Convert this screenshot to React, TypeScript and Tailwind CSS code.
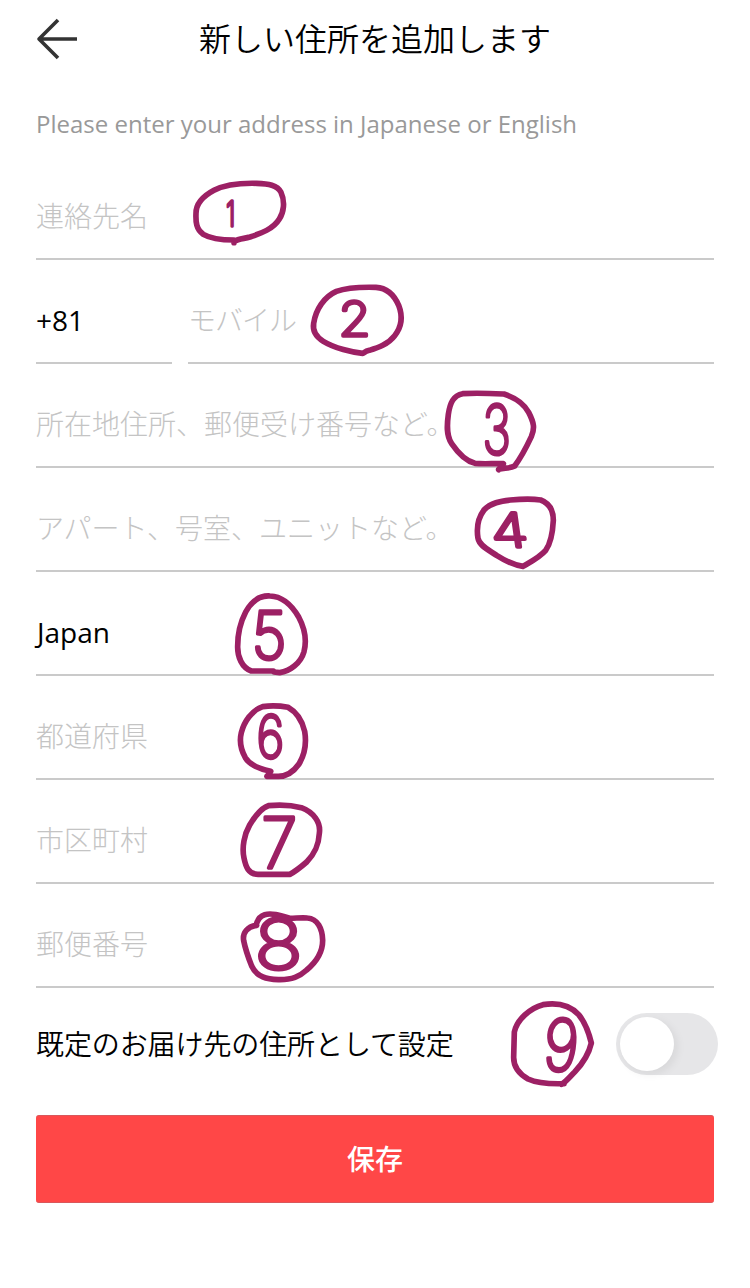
import React, { useState } from 'react';
import clsx from 'clsx';

interface MarkProps {
  digit: string;
  ring: string;
  className: string;
  viewBox: string;
  // digit placement: centre, baseline, size and horizontal stretch
  x: number;
  y: number;
  size: number;
  stretch: number;
  slant?: number;
}

// Hand-drawn numbered ring laid over a form row
const Mark = ({ digit, ring, className, viewBox, x, y, size, stretch, slant = 0 }: MarkProps) => (
  <svg
    viewBox={viewBox}
    className={clsx('absolute pointer-events-none overflow-visible', className)}
    fill="none"
    stroke="#9c2064"
    strokeLinecap="round"
    strokeLinejoin="round"
  >
    <path d={ring} strokeWidth={17} />
    <text
      transform={`translate(${x} ${y}) skewX(${slant}) scale(${stretch} 1)`}
      textAnchor="middle"
      fontSize={size}
      fill="#9c2064"
      strokeWidth={10}
      className="font-['Inter','Lato',sans-serif] font-extralight"
    >
      {digit}
    </text>
  </svg>
);

const marks: Record<string, MarkProps> = {
  name: {
    digit: '1',
    className: 'left-[144px] top-[14px] w-[120px] h-[85px]',
    viewBox: '0 0 360 255',
    ring: 'M162 218 L162 210 C125 210 90 205 70 193 C48 178 47 155 48 130 C48 98 72 77 102 61 C138 42 190 39 230 40 C265 41 292 45 303 67 C316 95 311 127 298 147 C280 177 243 190 210 201 C192 206 176 206 162 214',
    x: 152, y: 168, size: 100, stretch: 0.7,
  },
  mobile: {
    digit: '2',
    className: 'left-[264px] top-[15px] w-[120px] h-[90px]',
    viewBox: '0 0 360 270',
    ring: 'M188 235 C155 232 105 220 70 199 C42 182 38 163 41 145 C47 103 73 65 109 49 C145 36 190 36 228 37 C264 39 283 61 296 91 C309 125 304 157 284 182 C264 208 234 218 208 226 C195 229 190 235 188 235',
    x: 164, y: 182, size: 142, stretch: 1.1,
  },
  street: {
    digit: '3',
    className: 'left-[394px] top-[16px] w-[120px] h-[95px]',
    viewBox: '0 0 360 285',
    ring: 'M206 269 L220 251 C190 250 160 253 135 250 C105 243 82 216 65 191 C48 166 51 133 55 103 C60 69 70 46 98 41 C140 38 180 40 222 42 C255 53 282 71 296 97 C312 128 315 145 304 170 C290 200 274 231 254 258 C240 266 220 263 206 268',
    x: 200, y: 221, size: 205, stretch: 0.7,
  },
  apartment: {
    digit: '4',
    className: 'left-[424px] top-[17px] w-[110px] h-[90px]',
    viewBox: '0 0 330 270',
    ring: 'M189 244 C158 240 133 226 111 212 C88 196 58 183 54 160 C49 129 54 99 72 75 C92 53 121 48 151 45 C185 42 216 41 242 45 C271 56 280 80 280 106 C278 145 272 175 257 196 C239 217 211 231 189 244',
    x: 154, y: 186, size: 142, stretch: 1.28, slant: 8,
  },
  country: {
    digit: '5',
    className: 'left-[184px] top-[13px] w-[100px] h-[100px]',
    viewBox: '0 0 300 300',
    ring: 'M160 258 L94 258 C66 248 52 216 53 183 C53 146 61 112 77 81 C94 50 120 31 150 33 C188 34 216 62 236 96 C252 126 261 165 252 200 C242 235 209 259 179 263 L162 261',
    x: 147, y: 223, size: 198, stretch: 0.92,
  },
  prefecture: {
    digit: '6',
    className: 'left-[189px] top-[19px] w-[100px] h-[90px]',
    viewBox: '0 0 300 270',
    ring: 'M126 244 L137 229 C107 223 75 211 61 188 C46 161 43 137 49 113 C57 81 80 46 113 35 C140 31 168 33 189 37 C216 52 232 80 239 109 C246 151 239 179 222 207 C205 231 185 247 153 244 L126 244',
    x: 136, y: 190, size: 178, stretch: 0.8,
  },
  city: {
    digit: '7',
    className: 'left-[194px] top-[15px] w-[105px] h-[90px]',
    viewBox: '0 0 315 270',
    ring: 'M180 238 L84 238 C55 238 47 214 42 189 C35 157 43 118 59 90 C73 67 92 39 115 32 C148 29 187 31 214 38 C251 52 273 82 268 115 C266 150 256 174 230 201 C215 214 194 230 180 238',
    x: 148, y: 220, size: 208, stretch: 0.94,
  },
  postcode: {
    digit: '8',
    className: 'left-[194px] top-[16px] w-[105px] h-[90px]',
    viewBox: '0 0 315 270',
    ring: 'M80 76 C52 80 37 98 41 122 C46 147 55 173 65 198 C81 232 111 238 145 239 C187 240 208 230 230 210 C258 187 278 156 278 121 C277 86 263 56 232 54 C214 52 198 55 180 55 C150 46 125 38 104 44 C90 48 82 60 78 76',
    x: 146, y: 207, size: 208, stretch: 1.15,
  },
  primary: {
    digit: '9',
    className: 'left-[459px] top-[2px] w-[110px] h-[105px]',
    viewBox: '0 0 330 315',
    ring: 'M207 281 C174 282 129 281 99 267 C67 249 55 228 56 200 L58 126 C66 88 106 54 144 44 C188 37 226 47 251 74 C271 98 282 130 289 159 C281 194 259 225 239 246 C224 261 211 277 200 283',
    x: 194, y: 244, size: 215, stretch: 0.84, slant: -4,
  },
};

interface RowProps {
  text: string;
  mark: MarkProps;
  filled?: boolean;
}

const Row = ({ text, mark, filled }: RowProps) => (
  <div className="relative flex h-[104px] items-center border-b-2 border-[#cacaca] pt-[18px]">
    <span className={filled ? 'pl-px text-black' : 'text-[#c4c4c4] font-light'}>{text}</span>
    <Mark {...mark} />
  </div>
);

const App = () => {
  const [isDefault, setIsDefault] = useState(false);

  return (
    <div className="min-h-[1288px] w-full bg-white px-9 font-['Open_Sans','Noto_Sans_CJK_JP',sans-serif] text-[28px] leading-10 text-black">
      <header className="grid h-[78px] grid-cols-[60px_1fr_60px] items-center">
        <button aria-label="戻る">
          <svg width="42" height="42" viewBox="0 0 42 42" fill="none" stroke="#333333" strokeWidth="3.6">
            <path d="M22 2 L3 21 L22 40 M3 21 H41" strokeLinejoin="round" />
          </svg>
        </button>
        <h1 className="text-center text-[32px] font-[350]">新しい住所を追加します</h1>
      </header>

      <p className="flex h-[78px] items-center pt-3.5 text-2xl text-[#999999]">
        Please enter your address in Japanese or English
      </p>

      <Row text="連絡先名" mark={marks.name} />

      <div className="relative flex h-[104px] gap-4">
        <div className="flex w-[136px] items-center border-b-2 border-[#cacaca] pt-[18px]">+81</div>
        <div className="flex flex-1 items-center border-b-2 border-[#cacaca] pt-[18px] font-light tracking-[-1px] text-[#c4c4c4]">
          モバイル
        </div>
        <Mark {...marks.mobile} />
      </div>

      <Row text="所在地住所、郵便受け番号など。" mark={marks.street} />
      <Row text="アパート、号室、ユニットなど。" mark={marks.apartment} />
      <Row text="Japan" mark={marks.country} filled />
      <Row text="都道府県" mark={marks.prefecture} />
      <Row text="市区町村" mark={marks.city} />
      <Row text="郵便番号" mark={marks.postcode} />

      <div className="relative flex h-28 items-center justify-between">
        <span className="font-[350] tracking-[-0.1px]">既定のお届け先の住所として設定</span>
        <button
          role="switch"
          aria-checked={isDefault}
          aria-label="既定の住所"
          onClick={() => setIsDefault(!isDefault)}
          className={clsx(
            '-mr-1 flex h-[62px] w-[102px] items-center rounded-full px-1',
            isDefault ? 'justify-end bg-[#ff4747]' : 'bg-[#e6e6e8]'
          )}
        >
          <span className="size-[54px] rounded-full bg-white shadow-[3px_3px_10px_rgba(0,0,0,0.07)]" />
        </button>
        <Mark {...marks.primary} />
      </div>

      <button className="mt-[15px] flex h-[88px] w-full items-center justify-center rounded-[3px] border-y border-[#d9575b] bg-[#ff4747] font-medium text-white">
        保存
      </button>
    </div>
  );
};

export default App;
